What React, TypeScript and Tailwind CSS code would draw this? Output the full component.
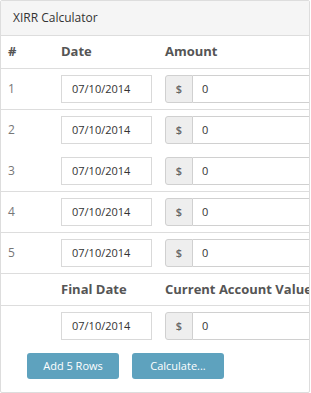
const rows = [1, 2, 3, 4, 5];

const DateInput = () => (
  <div className="w-[91px] h-[28px] shrink-0 border border-[#d9d9d9] bg-white flex items-center pl-[10px] text-[11px] text-[#333]">
    07/10/2014
  </div>
);

const AmountInput = () => (
  <div className="flex h-[28px] w-[200px] shrink-0">
    <div className="w-[28px] shrink-0 flex items-center justify-center bg-[#eeeeee] border border-[#d0d0d0] rounded-l-[3px] text-[11px] font-semibold text-[#666]">
      $
    </div>
    <div className="flex-1 border border-l-0 border-[#d0d0d0] bg-white flex items-center pl-[9px] text-[11px] text-[#333]">
      0
    </div>
  </div>
);

export default function App() {
  return (
    <div className="w-[311px] h-[393px] bg-white font-['Open_Sans',sans-serif]">
      <div className="w-[310px] h-[393px] border border-[#dddddd] rounded-[2px] overflow-hidden">
        <div className="h-[35px] bg-[#f5f5f5] border-b border-[#dddddd] flex items-center px-[12px] text-[12px] text-[#333]">
          XIRR Calculator
        </div>

        <div className="flex items-center h-[33px] border-b border-[#dddddd] text-[13px] font-bold text-[#555]">
          <div className="w-[60px] shrink-0 pl-[7px]">#</div>
          <div className="w-[104px] shrink-0">Date</div>
          <div className="whitespace-nowrap">Amount</div>
        </div>

        {rows.map((n) => (
          <div
            key={n}
            className={`flex items-center h-[41px] border-b ${n === 2 ? "border-transparent" : "border-[#dddddd]"}`}
          >
            <div className="w-[60px] shrink-0 pl-[7px] text-[12px] text-[#777]">{n}</div>
            <div className="w-[104px] shrink-0">
              <DateInput />
            </div>
            <AmountInput />
          </div>
        ))}

        <div className="flex items-center h-[32px] border-b border-[#dddddd] text-[13px] font-bold text-[#555]">
          <div className="w-[60px] shrink-0" />
          <div className="w-[104px] shrink-0 whitespace-nowrap">Final Date</div>
          <div className="whitespace-nowrap">Current Account Value</div>
        </div>

        <div className="flex items-center pt-[6px]">
          <div className="w-[60px] shrink-0" />
          <div className="w-[104px] shrink-0">
            <DateInput />
          </div>
          <AmountInput />
        </div>

        <div className="flex gap-[13px] pl-[26px] mt-[13px]">
          <button className="w-[92px] h-[26px] rounded-[3px] bg-[#5ea2be] text-white text-[11px]">
            Add 5 Rows
          </button>
          <button className="w-[92px] h-[26px] rounded-[3px] bg-[#5ea2be] text-white text-[11px]">
            Calculate...
          </button>
        </div>
      </div>
    </div>
  );
}
